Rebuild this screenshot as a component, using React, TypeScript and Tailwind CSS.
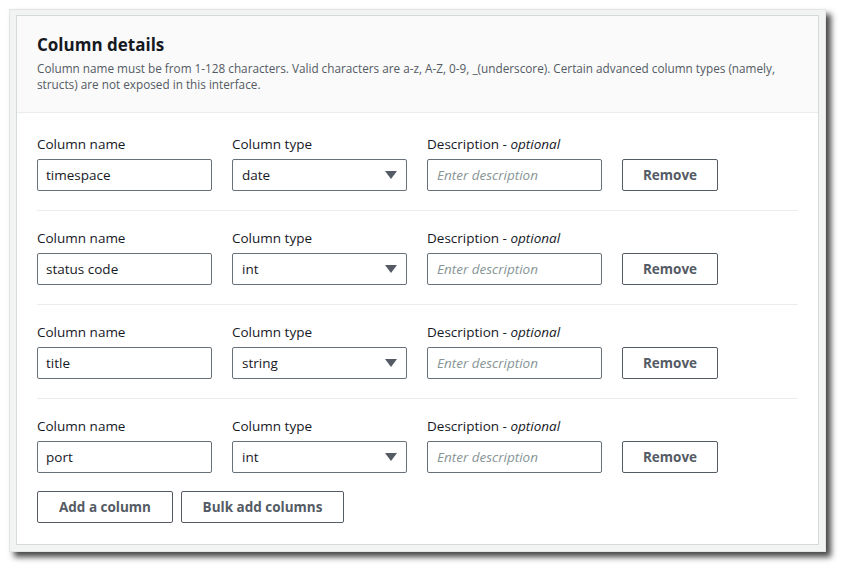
import React from "react";

const rows = [
  { name: "timespace", type: "date" },
  { name: "status code", type: "int" },
  { name: "title", type: "string" },
  { name: "port", type: "int" },
];

function Caret() {
  return (
    <svg width="12" height="8" viewBox="0 0 12 8" className="shrink-0">
      <path d="M0 0 L12 0 L6 8 Z" fill="#545b64" />
    </svg>
  );
}

export default function App() {
  return (
    <div
      className="w-[844px] h-[570px] bg-white pt-[9px] pl-[9px]"
      style={{ fontFamily: '"Open Sans", "Noto Sans", sans-serif' }}
    >
      <div className="w-[817px] h-[543px] bg-[#f2f3f3] border border-[#e3e5e5] pt-[5px] pl-[6px] shadow-[5px_5px_6px_rgba(0,0,0,0.72)]">
        <div className="w-[803px] h-[530px] bg-white border border-[#d5dbdb] flex flex-col">
          <div className="bg-[#fafafa] border-b border-[#eaeded] h-[97px] px-[20px] pt-[17px]">
            <div className="text-[17px] leading-[24px] font-bold text-[#16191f]">Column details</div>
            <div className="text-[11.75px] leading-[16px] text-[#545b64] mt-[3px] pr-[12px]">
              Column name must be from 1-128 characters. Valid characters are a-z, A-Z, 0-9, _(underscore). Certain advanced column types (namely, structs) are not exposed in this interface.
            </div>
          </div>
          <div className="px-[20px] pt-[21px]">
            {rows.map((r, i) => (
              <div
                key={i}
                className={
                  i < rows.length - 1
                    ? "pb-[19px] mb-[17px] border-b border-[#eaeded]"
                    : ""
                }
              >
                <div className="flex gap-[20px] text-[13.5px] leading-[20px] text-[#16191f]">
                  <div className="w-[175px]">Column name</div>
                  <div className="w-[175px]">Column type</div>
                  <div className="w-[175px]">
                    Description - <i>optional</i>
                  </div>
                </div>
                <div className="flex gap-[20px] mt-[5px] text-[13.5px] text-[#16191f]">
                  <div className="w-[175px] h-[32px] border border-[#687078] rounded-[2px] flex items-center px-[8px]">
                    {r.name}
                  </div>
                  <div className="w-[175px] h-[32px] border border-[#687078] rounded-[2px] flex items-center justify-between pl-[9px] pr-[9px]">
                    <span>{r.type}</span>
                    <Caret />
                  </div>
                  <div className="w-[175px] h-[32px] border border-[#687078] rounded-[2px] flex items-center px-[9px] italic text-[#879596]">
                    Enter description
                  </div>
                  <div className="w-[96px] h-[32px] border border-[#545b64] rounded-[2px] flex items-center justify-center font-bold text-[#545b64]">
                    Remove
                  </div>
                </div>
              </div>
            ))}
            <div className="flex gap-[8px] mt-[18px] text-[13.5px] font-bold text-[#545b64]">
              <div className="w-[136px] h-[32px] border border-[#545b64] rounded-[2px] flex items-center justify-center">
                Add a column
              </div>
              <div className="w-[163px] h-[32px] border border-[#545b64] rounded-[2px] flex items-center justify-center">
                Bulk add columns
              </div>
            </div>
          </div>
        </div>
      </div>
    </div>
  );
}
